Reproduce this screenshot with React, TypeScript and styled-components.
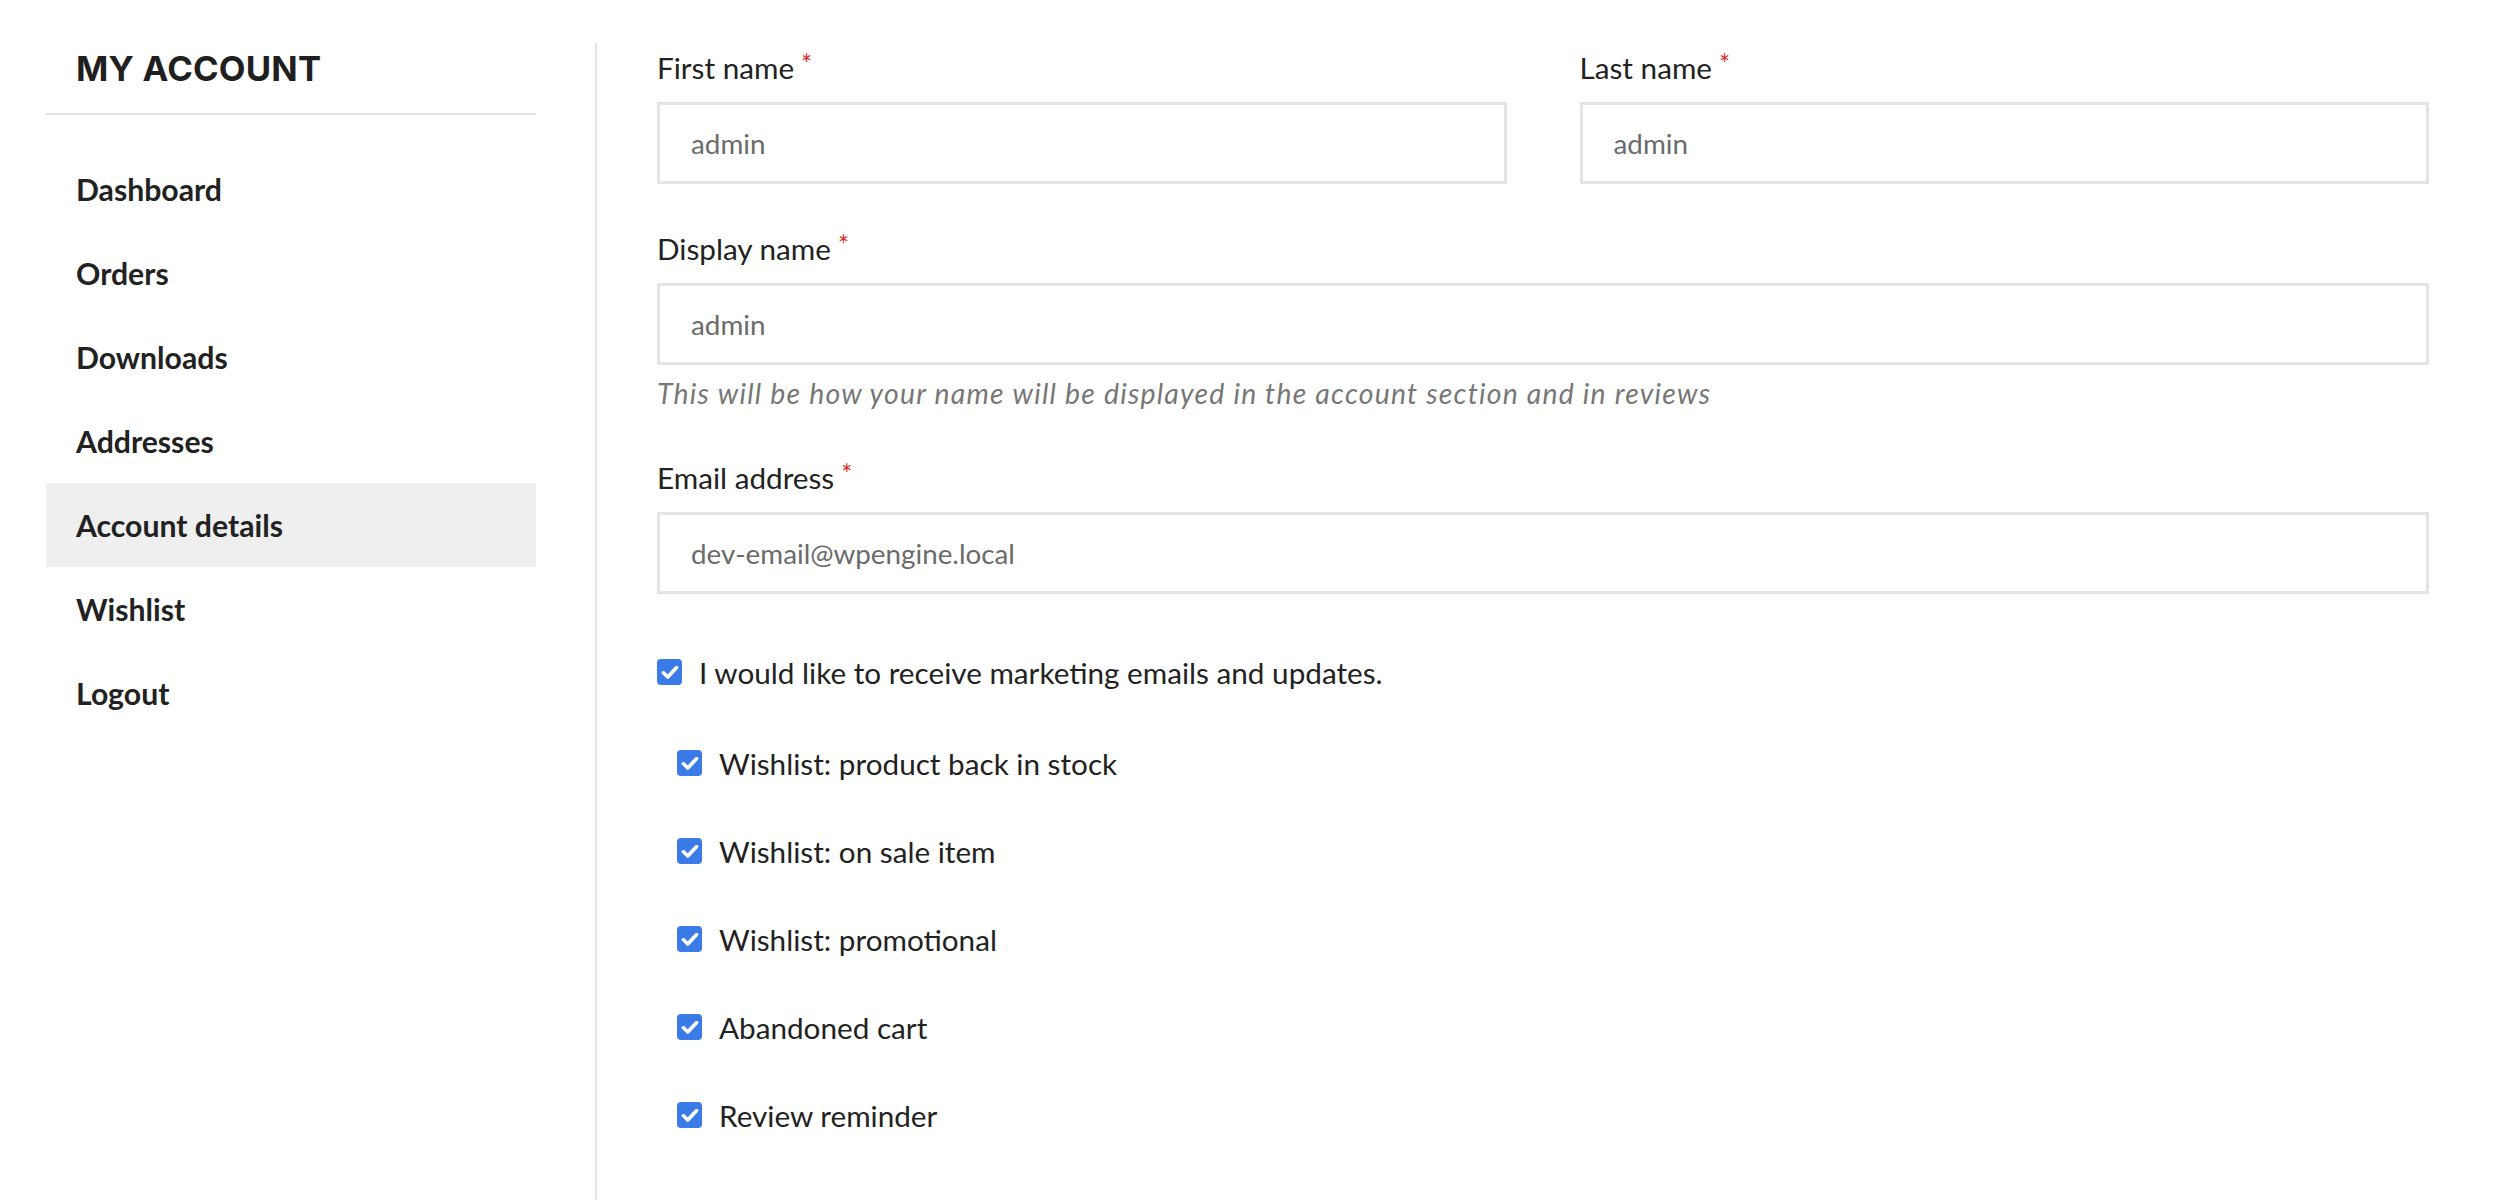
import React from "react";
import styled, { createGlobalStyle } from "styled-components";

const GlobalStyle = createGlobalStyle`
    html, body {
        margin: 0;
        padding: 0;
        background: #ffffff;
    }

    body {
        font-family: Lato, "Open Sans", sans-serif;
        color: #222222;
    }
`;

const navItems = [
    "Dashboard",
    "Orders",
    "Downloads",
    "Addresses",
    "Account details",
    "Wishlist",
    "Logout",
];

const subscriptions = [
    "Wishlist: product back in stock",
    "Wishlist: on sale item",
    "Wishlist: promotional",
    "Abandoned cart",
    "Review reminder",
];

const CheckBox = () => (
    <Box>
        <svg width="18" height="15" viewBox="0 0 18 15">
            <path
                d="M2.4 7.8 L6.8 12 L15.6 2.6"
                fill="none"
                stroke="#ffffff"
                strokeWidth="3.6"
                strokeLinecap="round"
                strokeLinejoin="round"
            />
        </svg>
    </Box>
);

type FieldProps = {
    label: string;
    value: string;
    hint?: string;
};

const Field = ({ label, value, hint }: FieldProps) => (
    <FieldBox>
        <Label>
            {label}
            <Required>*</Required>
        </Label>
        <Input>{value}</Input>
        {hint && <Hint>{hint}</Hint>}
    </FieldBox>
);

const App = () => {
    return (
        <>
            <GlobalStyle />
            <Wrap>
                <Sidebar>
                    <Heading>MY ACCOUNT</Heading>
                    <Nav>
                        {navItems.map((item) => (
                            <NavItem key={item} $active={item === "Account details"}>
                                {item}
                            </NavItem>
                        ))}
                    </Nav>
                </Sidebar>
                <Main>
                    <Row>
                        <Field label="First name" value="admin" />
                        <Field label="Last name" value="admin" />
                    </Row>
                    <Field
                        label="Display name"
                        value="admin"
                        hint="This will be how your name will be displayed in the account section and in reviews"
                    />
                    <Field label="Email address" value="dev-email@wpengine.local" />
                    <Checks>
                        <CheckRow>
                            <CheckBox />
                            <CheckText>I would like to receive marketing emails and updates.</CheckText>
                        </CheckRow>
                        <SubList>
                            {subscriptions.map((item) => (
                                <CheckRow key={item} $nested>
                                    <CheckBox />
                                    <CheckText>{item}</CheckText>
                                </CheckRow>
                            ))}
                        </SubList>
                    </Checks>
                </Main>
            </Wrap>
        </>
    );
};

export default App;

const Wrap = styled.div`
    display: flex;
    min-height: 100vh;
    box-sizing: border-box;
    padding: 43px 0 0 46px;
`;

const Sidebar = styled.aside`
    width: 490px;
    flex-shrink: 0;
    margin-right: 59px;
`;

const Heading = styled.h2`
    margin: 0;
    padding: 1px 30px 21px;
    height: 48px;
    line-height: 48px;
    font-family: Inter, "Open Sans", sans-serif;
    font-weight: 700;
    font-size: 34.7px;
    letter-spacing: 0.2px;
    color: #1f1f1f;
    border-bottom: 2px solid #e3e3e3;
`;

const Nav = styled.nav`
    display: flex;
    flex-direction: column;
    margin-top: 32px;
`;

const NavItem = styled.a<{ $active?: boolean }>`
    display: block;
    height: 84px;
    line-height: 84px;
    padding-left: 30px;
    font-size: 30.2px;
    font-weight: 700;
    color: #222222;
    background: ${(props) => (props.$active ? "#efefef" : "transparent")};
`;

const Main = styled.main`
    flex: 1;
    padding: 5px 67px 40px 60px;
    border-left: 2px solid #e3e3e3;
    display: flex;
    flex-direction: column;
    gap: 45px;
`;

const Row = styled.div`
    display: grid;
    grid-template-columns: 1fr 1fr;
    column-gap: 73px;
`;

const FieldBox = styled.div`
    display: flex;
    flex-direction: column;
`;

const Label = styled.label`
    display: block;
    height: 40px;
    font-size: 29.7px;
    line-height: 40px;
    color: #222222;
    margin-bottom: 14px;
`;

const Required = styled.span`
    color: #dd2a2a;
    font-size: 26px;
    line-height: 0;
    margin-left: 7px;
    vertical-align: 5px;
`;

const Input = styled.div`
    height: 82px;
    box-sizing: border-box;
    border: 3px solid #e4e4e4;
    padding-left: 31px;
    display: flex;
    align-items: center;
    font-size: 27.8px;
    color: #6b6b6b;
`;

const Hint = styled.em`
    display: block;
    margin-top: 8px;
    height: 40px;
    font-size: 28.4px;
    letter-spacing: 1.22px;
    line-height: 40px;
    color: #777777;
`;

const Checks = styled.div`
    display: flex;
    flex-direction: column;
    gap: 51px;
    margin-top: 13px;
`;

const SubList = styled.div`
    display: flex;
    flex-direction: column;
    gap: 48px;
`;

const CheckRow = styled.label<{ $nested?: boolean }>`
    display: flex;
    align-items: center;
    gap: 17px;
    height: 40px;
    padding-left: ${(props) => (props.$nested ? "20px" : "0")};
`;

const Box = styled.span`
    width: 25px;
    height: 26px;
    flex-shrink: 0;
    border-radius: 4px;
    background: #3b7be8;
    display: flex;
    align-items: center;
    justify-content: center;
`;

const CheckText = styled.span`
    font-size: 29.7px;
    color: #222222;
`;
